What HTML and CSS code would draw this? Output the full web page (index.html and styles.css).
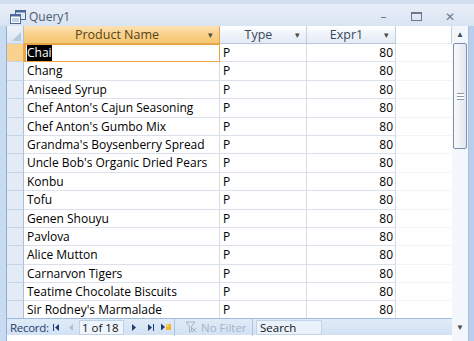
FILE: index.html
```html
<!DOCTYPE html>
<html lang="en">

<head>
    <meta charset="UTF-8" />
    <title>Query1</title>
    <link rel="stylesheet" href="styles.css">
</head>

<body>
    <div class="window">
        <div class="titlebar">
            <svg class="doc-icon" width="16" height="14" viewBox="0 0 16 14">
                <rect x="5.5" y="0.5" width="10" height="9" fill="#dfe9f7" stroke="#4a6a99" />
                <rect x="5.5" y="0.5" width="10" height="2" fill="#4a6a99" />
                <rect x="0.5" y="4.5" width="10" height="9" fill="#ffffff" stroke="#4a6a99" />
                <rect x="0.5" y="4.5" width="10" height="2" fill="#4a6a99" />
                <path d="M2 9h7M2 11h7" stroke="#8aa4c8" />
            </svg>
            <span class="title">Query1</span>
            <div class="win-buttons">
                <span class="wb">&#8211;</span>
                <span class="wb wb-max"></span>
                <span class="wb">&#10005;</span>
            </div>
        </div>

        <div class="main">
            <div class="edge"></div>
            <div class="sheet">
                <div class="grid">
                    <div class="row head">
                        <div class="sel corner"></div>
                        <div class="cell c-name active">Product Name <span class="arrow">&#9662;</span></div>
                        <div class="cell c-type">Type <span class="arrow">&#9662;</span></div>
                        <div class="cell c-expr">Expr1 <span class="arrow">&#9662;</span></div>
                        <div class="cell c-fill"></div>
                    </div>
                    <div id="rows"></div>
                </div>
                <div class="navbar">
                    <span class="nav-label">Record:</span>
                    <span class="nav-btn first">
                        <svg width="6" height="7" viewBox="0 0 6 7"><path d="M0 0h1v7H0zM6 0v7L2 3.5z" fill="#1f3f73" /></svg>
                    </span>
                    <span class="nav-btn prev">
                        <svg width="4" height="7" viewBox="0 0 4 7"><path d="M4 0v7L0 3.5z" fill="#b3c0d2" /></svg>
                    </span>
                    <span class="nav-box">1 of 18</span>
                    <span class="nav-btn next">
                        <svg width="4" height="7" viewBox="0 0 4 7"><path d="M0 0v7l4-3.5z" fill="#1f3f73" /></svg>
                    </span>
                    <span class="nav-btn last">
                        <svg width="6" height="7" viewBox="0 0 6 7"><path d="M0 0v7l4-3.5zM5 0h1v7H5z" fill="#1f3f73" /></svg>
                    </span>
                    <span class="nav-btn new">
                        <svg width="10" height="8" viewBox="0 0 10 8"><path d="M0 0.5v7l4-3.5z" fill="#1f3f73" /><rect x="5" y="1" width="5" height="6" fill="#f5b52a" /><rect x="5.5" y="1.5" width="2" height="2" fill="#fde59a" /></svg>
                    </span>
                    <span class="filter">
                        <svg width="12" height="12" viewBox="0 0 12 12">
                            <path d="M1 1h9L6.5 5.5V10L4.5 11V5.5Z" fill="none" stroke="#a8b4c4" />
                            <path d="M7 7l4 4M11 7l-4 4" stroke="#a8b4c4" />
                        </svg>
                        No Filter
                    </span>
                    <span class="search">Search</span>
                </div>
            </div>
            <div class="scrollbar">
                <span class="sb-arrow">&#9650;</span>
                <div class="track">
                    <div class="thumb"><i class="grip"></i></div>
                </div>
                <span class="sb-arrow">&#9660;</span>
            </div>
            <div class="edge right"></div>
        </div>
    </div>

    <script>
        const products = [
            'Chai', 'Chang', 'Aniseed Syrup', "Chef Anton's Cajun Seasoning",
            "Chef Anton's Gumbo Mix", "Grandma's Boysenberry Spread",
            "Uncle Bob's Organic Dried Pears", 'Konbu', 'Tofu', 'Genen Shouyu',
            'Pavlova', 'Alice Mutton', 'Carnarvon Tigers', 'Teatime Chocolate Biscuits',
            "Sir Rodney's Marmalade"
        ];

        const rows = document.getElementById('rows');
        products.forEach((name, i) => {
            const row = document.createElement('div');
            row.className = 'row' + (i === 0 ? ' current' : '');
            const nameCell = i === 0 ? '<span class="picked">' + name + '</span>' : name;
            row.innerHTML = `
          <div class="sel"></div>
          <div class="cell c-name">${nameCell}</div>
          <div class="cell c-type">P</div>
          <div class="cell c-expr">80</div>
          <div class="cell c-fill"></div>
        `;
            rows.appendChild(row);
        });
    </script>
</body>

</html>
```

FILE: styles.css
```css
* {
    margin: 0;
    padding: 0;
    box-sizing: border-box;
}

body {
    width: 474px;
    height: 341px;
    overflow: hidden;
    font-family: 'Open Sans', 'Noto Sans', sans-serif;
    background: #c5d8ef;
}

.window {
    width: 474px;
    height: 341px;
    display: flex;
    flex-direction: column;
    background: #c4d7ee;
}

/* title bar */
.titlebar {
    height: 26px;
    display: flex;
    align-items: center;
    padding: 3px 8px 0 10px;
    background: linear-gradient(#e9eff8, #dfe8f4 60%, #d9e4f2);
    border-top: 4px solid #d2dff0;
}

.doc-icon {
    margin-right: 3px;
}

.title {
    font-size: 12px;
    color: #4b5a70;
}

.win-buttons {
    margin-left: auto;
    display: flex;
}

.wb {
    width: 33px;
    text-align: center;
    font-size: 12px;
    color: #6b7a91;
}

.wb-max {
    display: inline-flex;
    justify-content: center;
    align-items: center;
}

.wb-max::before {
    content: "";
    width: 9px;
    height: 6px;
    border: 1px solid #6b7a91;
    border-top-width: 2px;
}

/* body */
.main {
    flex: 1;
    display: flex;
    min-height: 0;
}

.edge {
    width: 7px;
    background: #c9dbf0;
    border-right: 1px solid #8fb0d9;
}

.edge.right {
    width: 6px;
    border-right: none;
    border-left: 1px solid #a7c1e3;
    background: #b7cfec;
}

.sheet {
    width: 445px;
    display: flex;
    flex-direction: column;
    background: #fff;
}

.grid {
    flex: 1;
    overflow: hidden;
    font-size: 12px;
    color: #000;
}

.row {
    display: flex;
    height: 18.4px;
}

.row.head {
    height: 18px;
}

.sel {
    width: 17px;
    flex: none;
    background: #e2ebf6;
    border-right: 1px solid #aebfd6;
    border-bottom: 1px solid #c8d4e4;
}

.row.current .sel {
    background: #f9d28f;
    border-right-color: #e7a849;
}

.corner {
    position: relative;
    background: linear-gradient(#eef3fa, #dae5f3);
}

.corner::after {
    content: "";
    position: absolute;
    right: 2px;
    bottom: 2px;
    border-left: 9px solid transparent;
    border-bottom: 9px solid #b7c8de;
}

.cell {
    flex: none;
    padding: 0 3px;
    line-height: 17px;
    white-space: nowrap;
    overflow: hidden;
    border-right: 1px solid #d5dce6;
    border-bottom: 1px solid #dbe1ea;
}

.c-name {
    width: 196px;
}

.c-type {
    width: 87px;
}

.c-expr {
    width: 89px;
    text-align: right;
    padding-right: 2px;
}

.c-fill {
    flex: 1;
    border-right: none;
    border-bottom-color: #f2f4f7;
}

.head .cell {
    text-align: center;
    font-size: 12.5px;
    color: #3a475b;
    padding-right: 12px;
    background: linear-gradient(#ffffff, #eef3f9 50%, #e3ebf5);
    border-right: 1px solid #c3cfdf;
    border-bottom: 1px solid #b6c6db;
    position: relative;
}

.head .c-fill {
    background: #fff;
    border-bottom: 1px solid #e8edf3;
}

.head .cell.active {
    background: linear-gradient(#fbe2b4, #f8cf86 55%, #f6c772);
    border-color: #e2a950;
    color: #57421a;
}

.arrow {
    position: absolute;
    right: 6px;
    top: 0;
    font-size: 9px;
    color: #4a4a4a;
}

.row.current .c-name {
    border: 1px solid #eaa33f;
    border-left-width: 2px;
    background: #fff;
    line-height: 16px;
    padding-left: 1px;
}

.picked {
    background: #000;
    color: #fff;
}

/* record navigation */
.navbar {
    height: 17px;
    display: flex;
    align-items: center;
    background: linear-gradient(#e1ebf8, #d2e1f4);
    border-top: 1px solid #9ebbe2;
    font-size: 11.5px;
    color: #233f6d;
    padding-left: 3px;
    margin-bottom: 6px;
    white-space: nowrap;
}

.nav-label {
    width: 41px;
    letter-spacing: -0.3px;
}

.nav-btn {
    display: flex;
    align-items: center;
    justify-content: center;
    height: 16px;
}

.nav-btn.first {
    width: 9px;
}

.nav-btn.prev {
    width: 17px;
    padding-left: 4px;
}

.nav-btn.next {
    width: 20px;
}

.nav-btn.last {
    width: 14px;
}

.nav-btn.new {
    width: 15px;
}

.nav-box {
    width: 45px;
    height: 15px;
    line-height: 13px;
    background: #eef4fb;
    border: 1px solid #c0d1e6;
    color: #111;
    padding-left: 2px;
    margin-left: 2px;
}

.filter {
    display: flex;
    align-items: center;
    gap: 4px;
    height: 17px;
    width: 79px;
    padding-left: 10px;
    margin-left: 1px;
    border-left: 1px solid #aec4e2;
    border-right: 1px solid #aec4e2;
    color: #a6b4c6;
}

.search {
    width: 66px;
    height: 15px;
    line-height: 13px;
    margin-left: 3px;
    background: #e9f1fa;
    border: 1px solid #c3d4e9;
    color: #111;
    padding-left: 3px;
}

/* scrollbar */
.scrollbar {
    width: 16px;
    display: flex;
    flex-direction: column;
    align-items: center;
    background: #f3f6fa;
    padding-bottom: 6px;
}

.sb-arrow {
    font-size: 8px;
    color: #3d4b5e;
    height: 16px;
    line-height: 16px;
}

.track {
    flex: 1;
    width: 100%;
    padding: 1px 1px;
}

.thumb {
    height: 106px;
    border: 1px solid #7d8ea6;
    border-radius: 2px;
    background: linear-gradient(90deg, #f7f9fc, #e2e8f0);
    display: flex;
    align-items: center;
    justify-content: center;
}

.grip {
    width: 7px;
    height: 7px;
    border-top: 1px solid #8b98ab;
    border-bottom: 1px solid #8b98ab;
    background: linear-gradient(#fff 2px, #8b98ab 2px, #8b98ab 3px, #fff 3px);
}
```
